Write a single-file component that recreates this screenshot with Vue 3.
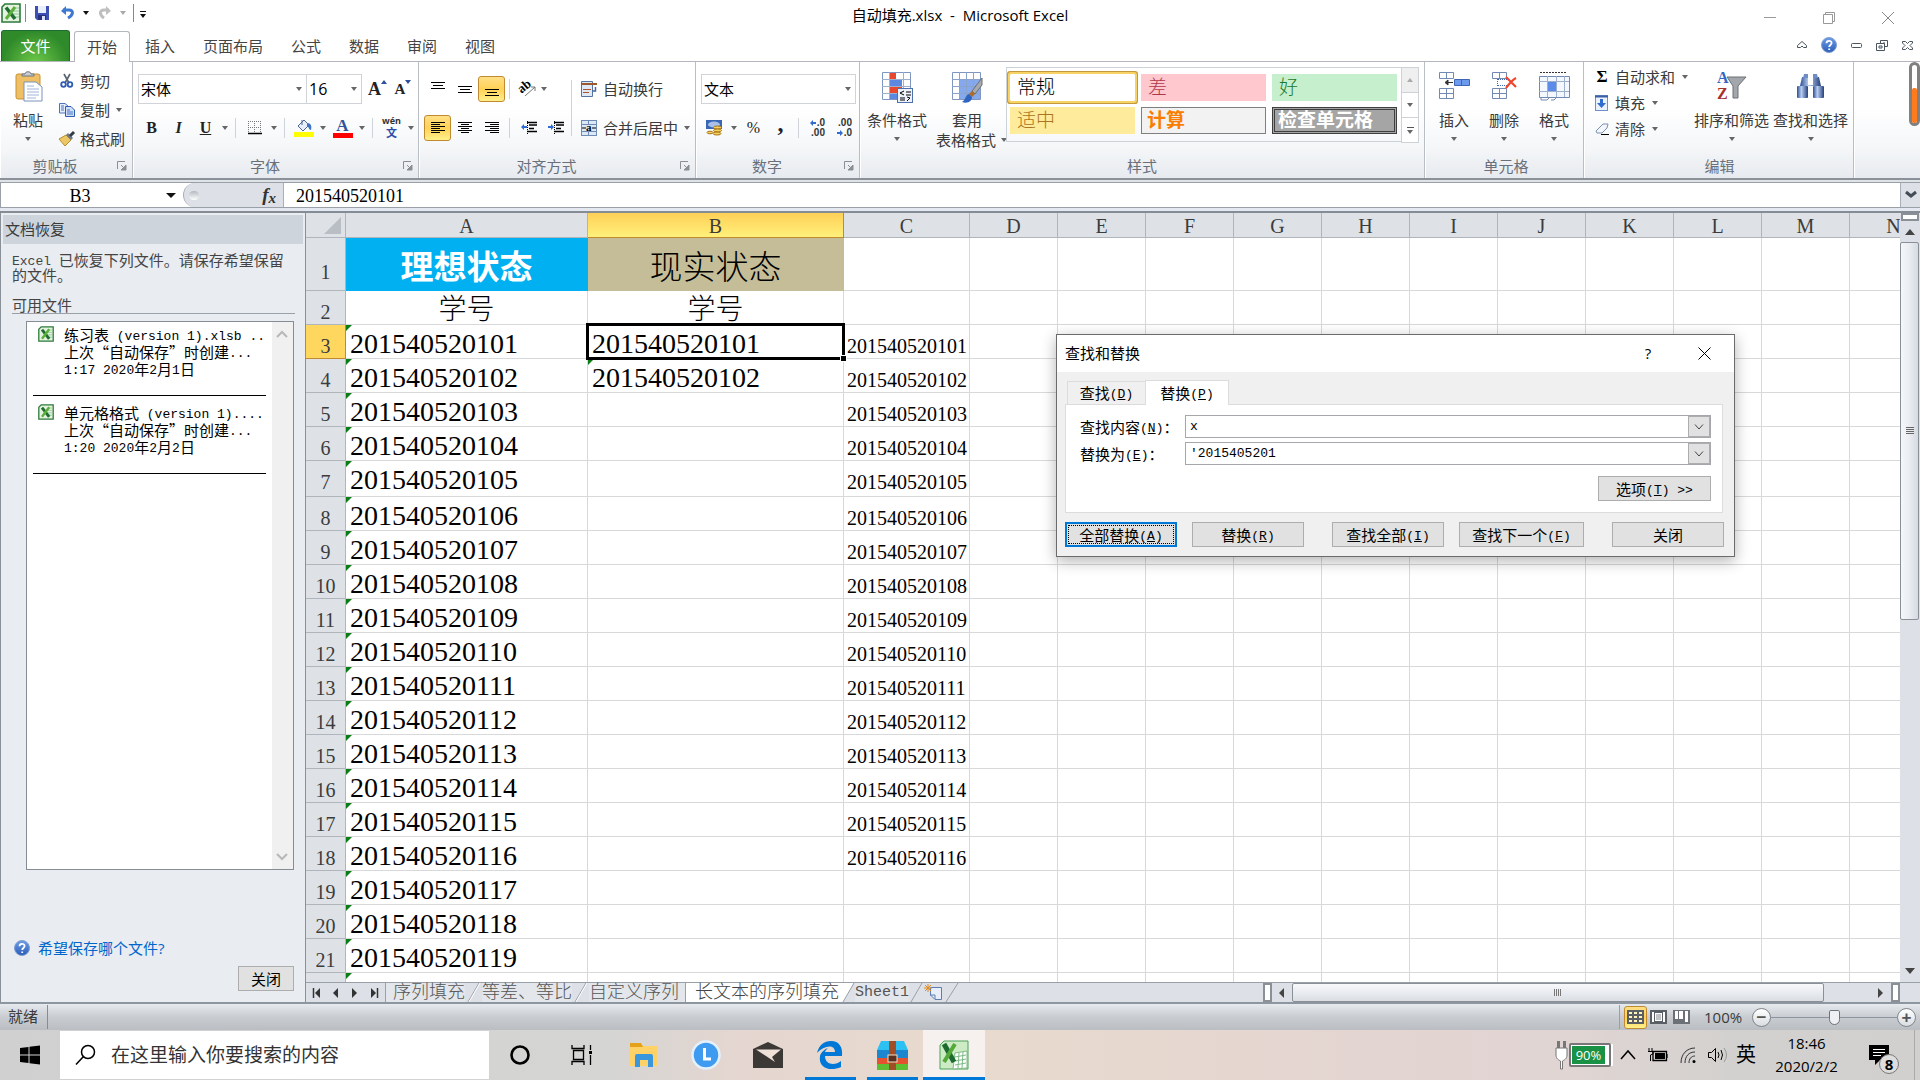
<script setup>
import { ref } from 'vue'

const ribbonTabs = ['插入', '页面布局', '公式', '数据', '审阅', '视图']
const columns = ['A', 'B', 'C', 'D', 'E', 'F', 'G', 'H', 'I', 'J', 'K', 'L', 'M', 'N']
const restColumns = columns.slice(3)

const base = 201540520100
const rows = Array.from({ length: 19 }, (_, i) => ({
  n: i + 3,
  a: String(base + i + 1),
  b: i < 2 ? String(base + i + 1) : '',
  c: i < 16 ? String(base + i + 1) : '',
}))

const files = [
  { doc: '练习表', rest: ' (version 1).xlsb ..', time: ['1:17 2020', '年', '2', '月', '1', '日'] },
  { doc: '单元格格式', rest: ' (version 1)....', time: ['1:20 2020', '年', '2', '月', '2', '日'] },
]

const nameBox = ref('B3')
const formula = ref('201540520101')
const findText = ref('x')
const replaceText = ref("'2015405201")
const zoomLevel = ref(50)
</script>

<template>
  <div class="window">
    <svg width="0" height="0" class="defs" aria-hidden="true">
      <defs>
        <linearGradient id="helpFill" x1="0" y1="0" x2="0" y2="1">
          <stop offset="0" stop-color="#6d9de6" /><stop offset="1" stop-color="#2a5db8" />
        </linearGradient>
        <linearGradient id="steel" x1="0" y1="0" x2="1" y2="0">
          <stop offset="0" stop-color="#2c4f93" /><stop offset="0.4" stop-color="#b8cdf0" /><stop offset="1" stop-color="#23407c" />
        </linearGradient>
        <symbol id="xl" viewBox="0 0 20 20">
          <path d="M4 1H19V19H1V4Z" fill="#e4f3df" stroke="#2c7a3a" stroke-width="1.6" />
          <path d="M12 5h6M12 8h6M12 11h6M12 14h6" stroke="#8cc79a" />
          <path d="M5 4.500L14 16" stroke="#1f6d33" stroke-width="3.600" />
          <path d="M14 4L5 16" stroke="#5eae3c" stroke-width="3" />
        </symbol>
        <symbol id="help" viewBox="0 0 16 16">
          <circle cx="8" cy="8" r="7.500" fill="url(#helpFill)" stroke="#7f9fd0" />
          <path d="M5.500 6.200C5.500 3 10.600 3 10.600 6.100C10.600 8 8.200 8 8.200 10M8.200 11.500V13" fill="none" stroke="#fff" stroke-width="1.800" />
        </symbol>
        <symbol id="launch" viewBox="0 0 10 10">
          <path d="M0.500 8V0.500H8" fill="none" stroke="#8a8f96" /><path d="M4 4L8 8M9 4V9H4Z" fill="#8a8f96" stroke="#8a8f96" />
        </symbol>
      </defs>
    </svg>

    <header class="titlebar">
      <div class="quick">
        <svg width="20" height="20"><use href="#xl" /></svg>
        <i class="qsep"></i>
        <button class="q save" aria-label="保存">
          <svg width="14" height="14" viewBox="0 0 14 14"><path d="M0 0H14V14H2L0 12Z" fill="#3e4fb4" /><rect x="3" width="8" height="7" fill="#e8eefb" /><rect x="3" y="9" width="8" height="5" fill="#26307c" /><rect x="7" y="10" width="3" height="4" fill="#d8e0f4" /></svg>
        </button>
        <button class="q undo" aria-label="撤消">
          <svg width="14" height="14" viewBox="0 0 14 14"><path d="M2 4H8C13 4 12.500 9 7 12" fill="none" stroke="#3f78d0" stroke-width="3" /><path d="M0 5L5 0V9Z" fill="#3f78d0" /></svg>
        </button>
        <i class="tri dark"></i>
        <button class="q redo" aria-label="恢复">
          <svg width="14" height="14" viewBox="0 0 14 14"><path d="M11 4H6C1 4 1.500 9 6 12" fill="none" stroke="#bfbfbf" stroke-width="3" /><path d="M13 5L8 0V9Z" fill="#bfbfbf" /></svg>
        </button>
        <i class="tri pale"></i>
        <i class="qsep end"></i>
        <span class="more"><i class="tri dark"></i></span>
      </div>
      <h1>自动填充.xlsx&nbsp; - &nbsp;Microsoft Excel</h1>
      <div class="winbtns">
        <button aria-label="最小化"><svg width="12" height="12"><path d="M0 5.500H12" stroke="#999" /></svg></button>
        <button aria-label="还原"><svg width="12" height="12"><path d="M0.500 2.500H9.500V11.500H0.500ZM2.500 2.500V0.500H11.500V9.500H9.500" fill="none" stroke="#999" /></svg></button>
        <button aria-label="关闭窗口"><svg width="12" height="12"><path d="M0 0L12 12M12 0L0 12" stroke="#888" /></svg></button>
      </div>
    </header>

    <nav class="tabs">
      <button class="file">文件</button>
      <button class="on">开始</button>
      <button v-for="t in ribbonTabs" :key="t">{{ t }}</button>
      <div class="mdi">
        <svg width="10" height="8"><path d="M0.500 4.500L5 0.500L9.500 4.500V6.500H6.500L5 5L3.500 6.500H0.500Z" fill="#fff" stroke="#4a5560" /></svg>
        <svg width="16" height="16"><use href="#help" /></svg>
        <svg width="11" height="5"><rect x="0.500" y="0.500" width="10" height="4" rx="1" fill="#fff" stroke="#4a5560" /></svg>
        <svg width="12" height="11"><path d="M4.500 3.500V0.500H11.500V6.500H8.500M0.500 3.500H8.500V10.500H0.500ZM3 6H6V8H3ZM7 3H9" fill="none" stroke="#4a5560" /></svg>
        <svg width="11" height="9"><path d="M0.500 0.500H3.500L5.500 2.500L7.500 0.500H10.500V2L8 4.500L10.500 7V8.500H7.500L5.500 6.500L3.500 8.500H0.500V7L3 4.500L0.500 2Z" fill="#fff" stroke="#4a5560" /></svg>
      </div>
    </nav>

    <section class="ribbon">
      <div class="group g-clip">
        <div class="body">
          <button class="big paste">
            <svg width="30" height="32" viewBox="0 0 30 32"><rect x="1" y="3" width="24" height="25" rx="2" fill="#efbf65" stroke="#c99236" /><path d="M7 5V3H10C10 0 16 0 16 3H19V5Z" fill="#c9cdd3" stroke="#6e7780" /><path d="M9 11H21L27 16V30H9Z" fill="#fff" stroke="#7a92bd" /><path d="M12 15H19M12 18H24M12 21H24M12 24H24M12 27H21" stroke="#9fb4d8" /></svg>
            <span>粘贴</span><i class="tri"></i>
          </button>
          <div class="smalls wide">
            <button><svg width="16" height="16" viewBox="0 0 16 16"><path d="M5 1L10 10M11 1L6 10" stroke="#5b6675" stroke-width="1.700" /><circle cx="4.500" cy="11.500" r="2.300" fill="none" stroke="#2e5cb5" stroke-width="1.800" /><circle cx="11" cy="11.500" r="2.300" fill="none" stroke="#2e5cb5" stroke-width="1.800" /></svg>剪切</button>
            <button><svg width="16" height="16" viewBox="0 0 16 16"><path d="M0.500 1.500H6L9 4V11H0.500Z" fill="#e5eefc" stroke="#4a74be" /><path d="M6.500 4.500H12L15.500 8V14.500H6.500Z" fill="#cfe0fa" stroke="#2f5cb0" /><path d="M2 4H5M2 6H5M2 8H5M8 8H11M8 10H14M8 12H14" stroke="#4a74be" /></svg>复制<i class="tri"></i></button>
            <button><svg width="16" height="16" viewBox="0 0 16 16"><path d="M0 8L7 4L12 9L6 15Z" fill="#ecc765" stroke="#b78c2c" /><path d="M7 4L9 2L14 7L12 9Z" fill="#707a86" /><path d="M11 5L15 1" stroke="#343c46" stroke-width="3" /></svg>格式刷</button>
          </div>
        </div>
        <footer>剪贴板<svg width="10" height="10"><use href="#launch" /></svg></footer>
      </div>

      <div class="group g-font">
        <div class="body rows">
          <div class="row">
            <label class="combo font-name"><select aria-label="字体"><option>宋体</option></select><i class="tri"></i></label>
            <label class="combo font-size"><select aria-label="字号"><option>16</option></select><i class="tri"></i></label>
            <button class="ib serif grow">A<i class="tri up blue"></i></button>
            <button class="ib serif shrink">A<i class="tri blue"></i></button>
          </div>
          <div class="row">
            <button class="ib serif">B</button><button class="ib serif"><em>I</em></button><button class="ib serif"><u>U</u></button>
            <i class="tri dd"></i><i class="vs"></i>
            <button class="ib" aria-label="边框"><svg width="14" height="14"><path d="M0 0.500H13M0 6.500H13M0.500 0V12M6.500 0V12M12.500 0V12" stroke="#777" stroke-dasharray="1 1" /><path d="M0 12.500H14" stroke="#000" stroke-width="1.500" /></svg></button>
            <i class="tri dd"></i><i class="vs"></i>
            <button class="ib" aria-label="填充颜色"><svg width="20" height="18" viewBox="0 0 20 18"><path d="M4 7L10 1L15 6L9 12Z" fill="#e9eff8" stroke="#4c6796" /><path d="M8 1V6" stroke="#4c6796" /><path d="M13 4C17 4 18 7 17 11C15 11 15 8 13 7Z" fill="#3e72c4" /><rect y="13" width="20" height="5" fill="#ff0" /></svg></button>
            <i class="tri dd"></i>
            <button class="ib fontcolor"><b>A</b></button>
            <i class="tri dd"></i><i class="vs"></i>
            <button class="ib wen"><span>wén</span><span>文</span></button>
            <i class="tri dd"></i>
          </div>
        </div>
        <footer>字体<svg width="10" height="10"><use href="#launch" /></svg></footer>
      </div>

      <div class="group g-align">
        <div class="body">
          <div class="rows">
            <div class="row">
              <button class="ib" aria-label="顶端对齐"><svg width="14" height="18"><path d="M0 2.500H14M2 5.500H12M0 8.500H14" stroke="#000" /></svg></button>
              <button class="ib" aria-label="垂直居中"><svg width="14" height="18"><path d="M0 6.500H14M2 9.500H12M0 12.500H14" stroke="#000" /></svg></button>
              <button class="ib sel" aria-label="底端对齐"><svg width="14" height="18"><path d="M0 9.500H14M2 12.500H12M0 15.500H14" stroke="#000" /></svg></button>
              <i class="vs"></i>
              <button class="ib slant" aria-label="方向"><svg width="17" height="16" viewBox="0 0 17 16"><text x="0" y="9" transform="rotate(-40 6 9)" font-size="13" font-weight="bold" font-family="Liberation Serif">ab</text><path d="M5 15L15 6M11 6H15V10" fill="none" stroke="#777" /></svg></button>
              <i class="tri dd near"></i>
            </div>
            <div class="row">
              <button class="ib sel" aria-label="左对齐"><svg width="14" height="14"><path d="M0 1.500H14M0 3.500H9M0 5.500H14M0 7.500H9M0 9.500H14M0 11.500H9" stroke="#000" /></svg></button>
              <button class="ib" aria-label="居中"><svg width="14" height="14"><path d="M0 1.500H14M3 3.500H11M0 5.500H14M3 7.500H11M0 9.500H14M3 11.500H11" stroke="#000" /></svg></button>
              <button class="ib" aria-label="右对齐"><svg width="14" height="14"><path d="M0 1.500H14M5 3.500H14M0 5.500H14M5 7.500H14M0 9.500H14M5 11.500H14" stroke="#000" /></svg></button>
              <i class="vs"></i>
              <button class="ib" aria-label="减少缩进"><svg width="16" height="14"><path d="M6 1.500H16M8 4H16M8 7.500H13M6 10.500H16" stroke="#000" stroke-width="1.600" /><path d="M6.500 0V14" stroke="#000" stroke-dasharray="1 1" /><path d="M0 6L3 3V5H6V7H3V9Z" fill="#2f6bd0" /></svg></button>
              <button class="ib" aria-label="增加缩进"><svg width="16" height="14"><path d="M6 1.500H16M8 4H16M8 7.500H13M6 10.500H16" stroke="#000" stroke-width="1.600" /><path d="M6.500 0V14" stroke="#000" stroke-dasharray="1 1" /><path d="M6 6L3 3V5H0V7H3V9Z" fill="#2f6bd0" /></svg></button>
            </div>
          </div>
          <i class="vs tall"></i>
          <div class="rows">
            <button class="row lab"><svg width="16" height="16"><path d="M0.500 0.500H11.500V15.500H0.500Z" fill="#dfe8f5" stroke="#56739f" /><path d="M0 3H16" stroke="#9c5a2c" stroke-width="2" /><path d="M2 8.500H10M2 11.500H8" stroke="#b0532c" /><path d="M14.500 6V10H11" fill="none" stroke="#46699f" stroke-width="1.500" /></svg>自动换行</button>
            <button class="row lab"><svg width="16" height="16"><rect width="16" height="16" fill="#6f8bb5" /><path d="M1 1H7V4H1ZM8 1H15V4H8ZM1 12H7V15H1ZM8 12H15V15H8ZM1 5H15V11H1Z" fill="#dce8f6" /><path d="M1 8H5M11 8H15" stroke="#000" /><text x="5" y="11" font-size="11" font-weight="bold" font-family="Liberation Serif">a</text></svg>合并后居中<i class="tri"></i></button>
          </div>
        </div>
        <footer>对齐方式<svg width="10" height="10"><use href="#launch" /></svg></footer>
      </div>

      <div class="group g-num">
        <div class="body rows">
          <div class="row"><label class="combo num-format"><select aria-label="数字格式"><option>文本</option></select><i class="tri"></i></label></div>
          <div class="row">
            <button class="ib" aria-label="会计数字格式"><svg width="17" height="16"><rect width="16" height="9" fill="#3a66b5" /><ellipse cx="8" cy="4.500" rx="6" ry="3" fill="#a9c1e8" /><ellipse cx="11.500" cy="7.500" rx="4" ry="1.500" fill="#f5cf5a" stroke="#a6741a" /><ellipse cx="11.500" cy="10.500" rx="4" ry="1.500" fill="#f5cf5a" stroke="#a6741a" /><ellipse cx="11" cy="13.500" rx="4" ry="1.500" fill="#f5cf5a" stroke="#a6741a" /><ellipse cx="4" cy="12.500" rx="3" ry="1.300" fill="#f5cf5a" stroke="#a6741a" /></svg></button>
            <i class="tri dd"></i>
            <button class="ib pct">%</button>
            <button class="ib comma">,</button>
            <i class="vs"></i>
            <button class="ib dec"><span><svg width="6" height="6"><path d="M0 3L3 0V2H6V4H3V6Z" fill="#2f6bd0" /></svg>.0</span><span>.00</span></button>
            <button class="ib dec"><span>.00</span><span><svg width="6" height="6"><path d="M6 3L3 0V2H0V4H3V6Z" fill="#2f6bd0" /></svg>.0</span></button>
          </div>
        </div>
        <footer>数字<svg width="10" height="10"><use href="#launch" /></svg></footer>
      </div>

      <div class="group g-style">
        <div class="body">
          <button class="big w70"><svg width="31" height="32" viewBox="0 0 31 32"><path d="M0.500 1.500H28.500V28.500H0.500Z" fill="#fff" stroke="#7f97c0" /><path d="M0 8.500H28M0 15.500H28M0 22.500H28M7.500 1V28M21.500 1V28" stroke="#9fb0cf" /><path d="M8 2H14V8H8ZM8 16H20V22H8Z" fill="#e8482f" /><path d="M8 9H20V15H8ZM8 23H16V28H8Z" fill="#5c88e0" /><rect x="15.500" y="17.500" width="15" height="14" fill="#eef3fb" stroke="#4d72ac" /><path d="M22 20L18 22L22 24M18 27H23M18 29H23M24 21H29M24 24H29M25 26L28 27L25 30" fill="none" stroke="#000" /></svg><span>条件格式</span><i class="tri"></i></button>
          <button class="big w70 two"><svg width="31" height="32" viewBox="0 0 31 32"><path d="M0.500 1.500H28.500V28.500H0.500Z" fill="#fff" stroke="#7f97c0" /><path d="M8 8H28V28H8Z" fill="#86a9ee" /><path d="M0 8.500H28M0 15.500H28M0 22.500H28M7.500 1V28M14.500 1V28M21.500 1V28" stroke="#8ba2cb" /><path d="M30 7L20 20L23 23L30 14Z" fill="#a7a9ad" stroke="#6c6e72" /><path d="M20 20L17 23L20 26L23 23Z" fill="#b06c24" /><path d="M17 23C13 24 14 29 10 31C16 33 20 30 20 26Z" fill="#2f65bf" /></svg><span>套用</span><span>表格格式<i class="tri"></i></span></button>
          <div class="gallery">
            <div class="swatches">
              <button class="sw normal">常规</button><button class="sw bad">差</button><button class="sw good">好</button>
              <button class="sw neutral">适中</button><button class="sw calc">计算</button><button class="sw check">检查单元格</button>
            </div>
            <div class="gscroll"><button aria-label="上一行"><i class="tri up pale"></i></button><button aria-label="下一行"><i class="tri"></i></button><button aria-label="其他"><span class="bar"></span><i class="tri"></i></button></div>
          </div>
        </div>
        <footer>样式</footer>
      </div>

      <div class="group g-cells">
        <div class="body">
          <button class="big w50"><svg width="31" height="32" viewBox="0 0 31 32"><path d="M0.500 1.500H14.500V7.500H0.500ZM7.500 1V7M0.500 17.500H14.500V27.500H0.500ZM7.500 17V27M0 22.500H14" fill="#fff" stroke="#7289b3" /><path d="M15.500 8.500H30.500V14.500H15.500ZM22.500 8V14" fill="#6c9aec" stroke="#3d66b4" /><path d="M6 11.500L9 9V14ZM9 11.500H14" fill="#333" stroke="#333" /></svg><span>插入</span><i class="tri"></i></button>
          <button class="big w50"><svg width="31" height="32" viewBox="0 0 31 32"><path d="M3.500 1.500H17.500V7.500H3.500ZM10.500 1V7M3.500 17.500H17.500V27.500H3.500ZM10.500 17V27M3 22.500H17" fill="#fff" stroke="#7289b3" /><path d="M9 8.500H18M9 14.500H18M8.500 8V15" fill="none" stroke="#3d66b4" stroke-dasharray="1 1" /><path d="M17 6L27 16M27 7C23 9 20 13 17 17" stroke="#f0452e" stroke-width="2.200" fill="none" /></svg><span>删除</span><i class="tri"></i></button>
          <button class="big w50"><svg width="31" height="32" viewBox="0 0 31 32"><path d="M1 1.500H27" stroke="#333" stroke-dasharray="2 1" /><path d="M0.500 5.500H30.500V26.500H0.500Z" fill="#f4f8ff" stroke="#7289b3" /><path d="M0 10.500H30M0 20.500H30M8.500 5V26M17.500 5V26M25.500 5V26" stroke="#9fb0cf" /><rect x="9" y="11" width="8" height="9" fill="#5c8bea" /><path d="M2 26V29H8L11 26M12 29H15L18 26" fill="none" stroke="#7289b3" /></svg><span>格式</span><i class="tri"></i></button>
        </div>
        <footer>单元格</footer>
      </div>

      <div class="group g-edit">
        <div class="body">
          <div class="smalls tight">
            <button><span class="sigma">Σ</span>自动求和<i class="tri"></i></button>
            <button><svg width="14" height="16"><rect x="0.500" y="0.500" width="12" height="15" fill="#eaf2fd" stroke="#6f8fc6" /><path d="M5 4H8V8H11L6.500 13L2 8H5Z" fill="#2f6bd0" /><path d="M0 1.500H13" stroke="#3a5fa5" stroke-width="2" /></svg>填充<i class="tri"></i></button>
            <button><svg width="14" height="14" viewBox="0 0 14 14"><path d="M1 9L8 2H13L12 6L7 11H2Z" fill="#f3f6fb" stroke="#7b8fb5" /><path d="M6 12.500H14" stroke="#000" /></svg>清除<i class="tri"></i></button>
          </div>
          <button class="big w80"><svg width="31" height="32" viewBox="0 0 31 32"><path d="M11 6H30L22 15V27H17V15Z" fill="#a3a6aa" stroke="#6d7074" /><text x="1" y="12" font-size="16" font-weight="bold" fill="#3567c2" font-family="Liberation Serif">A</text><text x="1" y="28" font-size="16" font-weight="bold" fill="#a8322b" font-family="Liberation Serif">Z</text></svg><span>排序和筛选</span><i class="tri"></i></button>
          <button class="big w80"><svg width="29" height="32" viewBox="0 0 29 32"><path d="M6 6H12V14H17V6H23L25 15H4Z" fill="url(#steel)" /><path d="M8 3H12V7H7ZM17 3H21L22 7H17Z" fill="#6f8dc4" /><rect x="1" y="15" width="11" height="12" rx="1" fill="url(#steel)" /><rect x="17" y="15" width="11" height="12" rx="1" fill="url(#steel)" /></svg><span>查找和选择</span><i class="tri"></i></button>
        </div>
        <footer>编辑</footer>
      </div>
      <div class="group rest"></div>
      <div class="pill"><span></span></div>
    </section>

    <section class="formula">
      <input v-model="nameBox" class="namebox" aria-label="名称框" />
      <i class="tri dark"></i>
      <div class="fx"><span class="knob"></span><em>f<sub>x</sub></em></div>
      <input v-model="formula" class="fbar" aria-label="编辑栏" />
      <button class="expand" aria-label="展开编辑栏"><svg width="12" height="8"><path d="M1 1L6 5L11 1" fill="none" stroke="#444c55" stroke-width="3" /></svg></button>
    </section>

    <main class="work">
      <aside class="pane">
        <h2>文档恢复</h2>
        <p><span class="lat">Excel </span>已恢复下列文件。请保存希望保留的文件。</p>
        <h3>可用文件</h3>
        <div class="filebox">
          <ul>
            <li v-for="f in files" :key="f.doc">
              <svg width="16" height="16"><use href="#xl" /></svg>
              <div>
                <div>{{ f.doc }}<span class="lat">{{ f.rest }}</span></div>
                <div>上次“自动保存”时创建<span class="lat">...</span></div>
                <div><span v-for="(p, i) in f.time" :key="i" :class="{ lat: i % 2 === 0 }">{{ p }}</span></div>
              </div>
            </li>
          </ul>
          <div class="fscroll">
            <svg width="10" height="7"><path d="M0 6L5 1L10 6" fill="none" stroke="#b8b8b8" stroke-width="2" /></svg>
            <svg width="10" height="7"><path d="M0 1L5 6L10 1" fill="none" stroke="#b8b8b8" stroke-width="2" /></svg>
          </div>
        </div>
        <a href="#help-save"><svg width="16" height="16"><use href="#help" /></svg>希望保存哪个文件?</a>
        <button class="btn paneclose">关闭</button>
      </aside>

      <div class="sheet">
        <div class="gridrow">
          <div class="grid">
            <table>
              <colgroup><col class="c-h" /><col class="c-a" /><col class="c-b" /><col class="c-c" /><col v-for="c in restColumns" :key="c" class="c-n" /></colgroup>
              <thead>
                <tr><th class="corner"><svg width="17" height="17"><path d="M17 0V17H0Z" fill="#b9bec4" /></svg></th><th v-for="c in columns" :key="c" :class="{ hot: c === 'B' }">{{ c }}</th></tr>
              </thead>
              <tbody>
                <tr class="r1"><th>1</th><td class="ideal">理想状态</td><td class="real">现实状态</td><td></td><td v-for="c in restColumns" :key="c"></td></tr>
                <tr><th>2</th><td class="mid">学号</td><td class="mid">学号</td><td></td><td v-for="c in restColumns" :key="c"></td></tr>
                <tr v-for="r in rows" :key="r.n" :class="{ r7: r.n === 7 }">
                  <th :class="{ hot: r.n === 3 }">{{ r.n }}</th>
                  <td class="flag">{{ r.a }}</td>
                  <td :class="{ flag: r.n === 4, active: r.n === 3 }">{{ r.b }}</td>
                  <td class="sm">{{ r.c }}</td>
                  <td v-for="c in restColumns" :key="c"></td>
                </tr>
                <tr><th></th><td class="flag"></td><td v-for="c in columns.slice(1)" :key="c"></td></tr>
              </tbody>
            </table>
          </div>
          <div class="vscroll">
            <span class="split"></span>
            <i class="arrow up"></i>
            <div class="track"><div class="thumb"><i></i><i></i><i></i><i></i></div></div>
            <i class="arrow down"></i>
          </div>
        </div>
        <div class="bottom">
          <div class="navs">
            <button aria-label="第一张"><svg width="8" height="10"><path d="M1.500 0V10" stroke="#333" stroke-width="1.500" /><path d="M8 0V10L3 5Z" fill="#333" /></svg></button>
            <button aria-label="上一张"><svg width="6" height="10"><path d="M5 0V10L0 5Z" fill="#333" /></svg></button>
            <button aria-label="下一张"><svg width="6" height="10"><path d="M0 0V10L5 5Z" fill="#333" /></svg></button>
            <button aria-label="最后一张"><svg width="8" height="10"><path d="M6.500 0V10" stroke="#333" stroke-width="1.500" /><path d="M0 0V10L5 5Z" fill="#333" /></svg></button>
          </div>
          <button class="stab">序列填充</button>
          <svg class="slash" width="17" height="19"><path d="M3 19L14 0" fill="none" stroke="#9aa0a8" /><path d="M4 19L15 0" stroke="#fff" /></svg>
          <button class="stab">等差、等比</button>
          <svg class="slash" width="17" height="19"><path d="M3 19L14 0" fill="none" stroke="#9aa0a8" /><path d="M4 19L15 0" stroke="#fff" /></svg>
          <button class="stab last">自定义序列</button>
          <button class="stab on">长文本的序列填充</button>
          <svg class="slash end" width="14" height="19"><path d="M0 0H13L2 19H0Z" fill="#fff" /><path d="M2 19L13 0" stroke="#9aa0a8" /></svg>
          <button class="stab eng">Sheet1</button>
          <svg class="slash" width="14" height="19"><path d="M2 19L13 0" stroke="#9aa0a8" /></svg>
          <button class="newsheet" aria-label="插入工作表"><svg width="20" height="17"><path d="M6.500 3.500H17.500V15.500H11L6.500 11Z" fill="#e8effb" stroke="#5f7cb0" /><path d="M11 15V11H6" fill="none" stroke="#5f7cb0" /><path d="M4 0V8M0 4H8M1 1L7 7M7 1L1 7" stroke="#e08a1e" /></svg></button>
          <svg class="slash" width="18" height="19"><path d="M2 19L14 0" stroke="#9aa0a8" /></svg>
          <div class="hscroll">
            <span class="hsplit"></span><i class="arrow left"></i>
            <div class="htrack"><div class="hthumb"><i></i><i></i><i></i><i></i></div></div>
            <i class="arrow right"></i><span class="hsplit"></span>
          </div>
        </div>
      </div>
    </main>

    <footer class="status">
      <span class="ready">就绪</span>
      <div class="views">
        <button class="sel" aria-label="普通"><svg width="17" height="14"><rect width="17" height="14" fill="#5a5f66" /><path d="M2 2H5V4H2ZM7 2H10V4H7ZM12 2H15V4H12ZM2 6H5V8H2ZM7 6H10V8H7ZM12 6H15V8H12ZM2 10H5V12H2ZM7 10H10V12H7ZM12 10H15V12H12Z" fill="#fff3b8" /></svg></button>
        <button aria-label="页面布局视图"><svg width="17" height="14"><rect x="1" y="1" width="15" height="12" fill="#fff" stroke="#5a5f66" stroke-width="2" /><rect x="4.500" y="2.500" width="8" height="9" fill="#fff" stroke="#5a5f66" /><path d="M6 5H11M6 7H11M6 9H11" stroke="#888" /></svg></button>
        <button aria-label="分页预览"><svg width="17" height="14"><rect width="17" height="14" fill="#6c7178" /><path d="M2 1H5V9H2ZM6 1H10V9H6ZM12 1H15V12H12Z" fill="#fff" /></svg></button>
        <span class="pctv">100%</span>
        <button class="round" aria-label="缩小">−</button>
        <input v-model="zoomLevel" type="range" aria-label="显示比例" />
        <button class="round" aria-label="放大">+</button>
      </div>
    </footer>

    <footer class="taskbar">
      <button class="start" aria-label="开始菜单"><svg width="20" height="20"><path d="M0 3L8.500 2V9.500H0ZM9.500 1.800L20 0.500V9.500H9.500ZM0 10.500H8.500V18L0 17ZM9.500 10.500H20V19.500L9.500 18.200Z" /></svg></button>
      <label class="search"><svg width="22" height="22"><circle cx="13" cy="8" r="6.500" fill="none" stroke="#000" stroke-width="1.500" /><path d="M8.500 12.500L1 20.500" stroke="#000" stroke-width="1.500" /></svg><input placeholder="在这里输入你要搜索的内容" /></label>
      <button class="app" aria-label="Cortana"><svg width="20" height="20"><circle cx="10" cy="10" r="8.500" fill="none" stroke="#000" stroke-width="2.600" /></svg></button>
      <button class="app" aria-label="任务视图"><svg width="22" height="20"><path d="M1 0V3.500H13V0M2.500 5.500H12.500V14.500H2.500ZM1 20V16.500H13V20M19.500 0V5M19.500 10V20" fill="none" stroke="#000" stroke-width="1.300" /><rect x="18" y="6" width="3" height="3" /></svg></button>
      <button class="app" aria-label="文件资源管理器"><svg width="28" height="24"><path d="M0 0H11L13 3H27V23H0Z" fill="#ffd267" /><path d="M0 0H11L13 4H0Z" fill="#e5a11a" /><path d="M5 24V13Q5 11 7 11H21Q23 11 23 13V24H18V17H10V24Z" fill="#3a96dd" /></svg></button>
      <button class="app" aria-label="时钟"><svg width="30" height="30"><circle cx="15" cy="15" r="13.500" fill="#3f9bf0" stroke="#e4f1fc" stroke-width="2.500" /><path d="M13.500 8V19H20" fill="none" stroke="#fff" stroke-width="3" /></svg></button>
      <button class="app" aria-label="邮件"><svg width="30" height="26"><path d="M0 7L15 0L30 7V26H0Z" fill="#3b3836" /><path d="M3 7.500H28L19 15L22 20L13 14Z" fill="#efe0d8" /></svg></button>
      <button class="app run" aria-label="Edge"><svg width="26" height="28" viewBox="0 0 26 28"><path d="M0 12C2 4 7 0 14 0C22 0 26 6 25 15H8C8 24 18 25 24 20V26C13 31 1 27 3 15C4 11 8 8 11 7C9 9 8 10 8 11H18C18 3 7 4 0 12Z" fill="#0078d7" /></svg></button>
      <button class="app run" aria-label="WinRAR"><svg width="31" height="29"><path d="M4 0H27L31 9H0Z" fill="#2cc0f3" /><rect y="9" width="31" height="8" fill="#1c86cf" /><rect y="17" width="31" height="6" fill="#e3532f" /><rect y="23" width="31" height="6" fill="#5dbe34" /><rect x="12" width="7" height="29" fill="#a04e25" /><rect x="11" y="14" width="9" height="7" fill="#5a2f1f" stroke="#f2e2c8" /></svg></button>
      <button class="app run cur" aria-label="Excel"><svg width="30" height="30" viewBox="0 0 30 30"><path d="M5 1H29V29H1V5Z" fill="#cdebc4" stroke="#4aa35a" /><path d="M16 13L28 11V28L14 29Z" fill="#fff" stroke="#7dbb86" /><path d="M16 17L27 15M16 21L27 19M16 25L27 23M20 13L19 28M24 12L23 28" stroke="#7dbb86" /><path d="M5 4L15 22" stroke="#1c6a32" stroke-width="5" /><path d="M16 4L5 22" stroke="#55a83a" stroke-width="4" /></svg></button>
      <div class="tray">
        <svg width="14" height="30"><path d="M3.500 1V9M9.500 1V9" stroke="#777" stroke-width="3" /><path d="M1 8H12V15C12 19 9 20 7.500 21V29H5.500V21C4 20 1 19 1 15Z" fill="#fff" stroke="#777" /></svg>
        <span class="battery"><b>90%</b></span>
        <svg class="g1" width="16" height="10"><path d="M1 9L8 1L15 9" fill="none" stroke="#000" stroke-width="1.500" /></svg>
        <svg class="g2" width="20" height="16"><path d="M5 4.500H18.500V13.500H5ZM19 7V11" fill="none" stroke="#000" stroke-width="1.300" /><rect x="7" y="6" width="10" height="6" /><path d="M1 1V4M4 1V4M0 4.500H5V7L2.500 8V14" fill="none" stroke="#000" /></svg>
        <svg class="g2" width="16" height="16"><path d="M1 16C1 7 7 1 15 1M5 16C5 9 9 5 15 5M9 16C9 12 11 9 15 9" fill="none" stroke="#333" /><circle cx="14" cy="14.500" r="1.500" /></svg>
        <svg class="g3" width="20" height="16"><path d="M0.500 5.500H3.500L7.500 1.500V14.500L3.500 10.500H0.500Z" fill="none" stroke="#000" /><path d="M10 5Q12 8 10 11M13 3Q16 8 13 13" fill="none" stroke="#000" /><path d="M16 1Q21 8 16 15" fill="none" stroke="#999" /></svg>
        <span class="ime">英</span>
        <div class="clock"><span>18:46</span><span>2020/2/2</span></div>
        <div class="notice"><svg width="20" height="20"><path d="M0 0H20V15H11L6 20V15H0Z" /><path d="M4 4.500H16M4 7.500H16M4 10.500H12" stroke="#fff" /></svg><span>8</span></div>
      </div>
    </footer>

    <div class="dialog" role="dialog" aria-label="查找和替换">
      <div class="dtitle"><span>查找和替换</span><button>?</button><button aria-label="关闭对话框"><svg width="13" height="13"><path d="M0.500 0.500L12.500 12.500M12.500 0.500L0.500 12.500" stroke="#000" /></svg></button></div>
      <div class="dtabs"><button>查找<span class="lat">(<u>D</u>)</span></button><button class="on">替换<span class="lat">(<u>P</u>)</span></button></div>
      <div class="dpanel">
        <label for="find">查找内容<span class="lat">(<u>N</u>)</span>：</label>
        <div class="dcombo"><input id="find" v-model="findText" /><button aria-label="查找历史"><svg width="10" height="6"><path d="M1 0.500L5 5L9 0.500" fill="none" stroke="#444" /></svg></button></div>
        <label for="repl">替换为<span class="lat">(<u>E</u>)</span>：</label>
        <div class="dcombo"><input id="repl" v-model="replaceText" /><button aria-label="替换历史"><svg width="10" height="6"><path d="M1 0.500L5 5L9 0.500" fill="none" stroke="#444" /></svg></button></div>
        <button class="btn opt">选项<span class="lat">(<u>T</u>) &gt;&gt;</span></button>
      </div>
      <div class="dbtns">
        <button class="btn focus">全部替换<span class="lat">(<u>A</u>)</span></button>
        <button class="btn">替换<span class="lat">(<u>R</u>)</span></button>
        <button class="btn far">查找全部<span class="lat">(<u>I</u>)</span></button>
        <button class="btn wide">查找下一个<span class="lat">(<u>F</u>)</span></button>
        <button class="btn far">关闭</button>
      </div>
    </div>
  </div>
</template>

<style>
body { margin: 0; overflow: hidden; }
</style>

<style scoped>
.window { position: relative; display: flex; flex-direction: column; height: 100vh; overflow: hidden; background: #fff; color: #3a3a3a; font: 15px/20px "Open Sans", "Noto Sans CJK SC", sans-serif; }
.window * { box-sizing: border-box; }
.defs { position: absolute; }
button { margin: 0; padding: 0; border: 0; background: none; color: inherit; font: inherit; white-space: nowrap; }
input, select { margin: 0; padding: 0; border: 0; outline: 0; color: #000; font: inherit; background: none; min-width: 0; }
svg { display: block; flex: none; overflow: visible; }
h1, h2, h3, p, ul { margin: 0; padding: 0; font: inherit; list-style: none; }

.tri { flex: none; width: 0; height: 0; border: solid transparent; border-width: 4px 3px 0; border-top-color: #666; }
.tri.dark { border-top-color: #111; }
.tri.pale { border-top-color: #aaa; }
.tri.up { border-width: 0 3px 4px; border-bottom-color: #666; }
.tri.up.pale { border-bottom-color: #aaa; }
.tri.blue { border-top-color: #2f4f9b; }
.tri.up.blue { border-bottom-color: #2f4f9b; }
.lat { font: 13px/8px "Liberation Mono", monospace; white-space: pre; vertical-align: 1px; }

/* title bar */
.titlebar { display: grid; grid-template-columns: 1fr auto 1fr; height: 30px; align-items: start; }
.quick { display: flex; align-items: center; height: 26px; padding-left: 1px; }
.qsep { width: 1px; height: 18px; background: #888; margin: 0 9px 0 4px; }
.qsep.end { margin: 0 6px 0 7px; }
.q { width: 26px; }
.q.undo { width: 22px; }
.q.redo { width: 22px; margin-left: 9px; }
.more { display: flex; border-top: 1px solid #111; padding-top: 2px; margin-top: 2px; }
h1 { color: #000; line-height: 30px; }
.winbtns { display: flex; justify-content: flex-end; padding: 12px 26px 0 0; gap: 47px; }
.winbtns button { width: 12px; }

/* tabs */
.tabs { display: flex; height: 32px; border-bottom: 1px solid #b4b8be; align-items: flex-end; padding-left: 1px; flex: none; }
.tabs > button { height: 31px; padding: 0 14px; color: #444; }
.tabs .file { width: 69px; color: #fff; border: 1px solid #1e6b34; border-bottom: 0; border-radius: 3px 3px 0 0; background: radial-gradient(ellipse at 50% 110%, #6fca4a, #2f8a2a 70%); margin-right: 4px; }
.tabs .on { padding: 0 12px; background: #fff; border: 1px solid #b4b8be; border-bottom: 0; border-radius: 3px 3px 0 0; height: 31px; margin: 0 1px -1px 0; }
.mdi { margin-left: auto; display: flex; align-items: center; gap: 14px; height: 32px; padding-right: 7px; }

/* ribbon */
.ribbon { position: relative; display: flex; height: 118px; flex: none; background: linear-gradient(#fff 0 40%, #f4f6f8 75%, #e7eaef); border-bottom: 2px solid #8b9198; }
.group { display: flex; flex-direction: column; flex: none; border-right: 1px solid #b9bec5; box-shadow: inset 1px 0 #fff; }
.group .body { flex: 1; display: flex; align-items: flex-start; }
.group footer { position: relative; display: flex; justify-content: center; height: 22px; line-height: 20px; color: #69707a; padding-right: 26px; }
.group footer svg { position: absolute; right: 5px; top: 5px; }
.g-clip { width: 133px; }
.group.g-clip footer { padding-right: 22px; }
.g-font { width: 286px; padding-left: 5px; }
.g-align { width: 277px; padding-left: 5px; }
.g-num { width: 164px; padding-left: 5px; }
.g-style { width: 565px; }
.group.g-style footer, .group.g-cells footer { padding-right: 0; }
.g-cells { width: 159px; padding-left: 4px; }
.g-edit { width: 270px; padding-left: 11px; }
.group.g-edit footer { padding-right: 9px; }
.rest { flex: 1 1 0; border: 0; }
.group .body.rows, .rows { display: flex; flex-direction: column; align-items: flex-start; gap: 9px; padding-top: 12px; }
.row { display: flex; align-items: center; height: 30px; }
.big { display: flex; flex-direction: column; align-items: center; padding-top: 9px; line-height: 20px; }
.big svg { margin-bottom: 7px; }
.big > .tri { margin-top: 7px; }
.big span { display: flex; align-items: center; }
.big span .tri { margin-left: 5px; }
.big.two span:last-child { margin-right: -9px; }
.paste { width: 56px; }
.paste svg { margin-left: 3px; }
.w70 { width: 70px; }
.g-style .body { padding-left: 2px; }
.w50 { width: 50px; }
.w80 { width: 79px; }
.smalls { display: flex; flex-direction: column; }
.smalls button { display: flex; align-items: center; gap: 5px; }
.smalls.wide { padding: 4px 0 0 3px; }
.smalls.wide button { height: 29px; gap: 5px; }
.smalls.wide .tri { margin-left: 1px; }
.smalls.tight { width: 97px; padding-top: 2px; }
.smalls.tight button { height: 26px; gap: 6px; }
.smalls.tight .tri { margin-left: 1px; }
.sigma { width: 14px; color: #000; font: bold 17px/20px "Liberation Serif", serif; }
.combo { display: grid; align-items: center; height: 30px; border: 1px solid #d0d3d8; background: #fff; }
.combo > * { grid-area: 1 / 1; }
.combo select { appearance: none; width: 100%; height: 27px; padding: 0 0 1px 2px; }
.combo .tri { justify-self: end; margin-right: 4px; pointer-events: none; }
.font-name { width: 169px; }
.font-size { width: 56px; margin-left: -1px; font-size: 16px; }
.num-format { width: 155px; }
.ib { display: flex; align-items: center; justify-content: center; width: 27px; height: 26px; flex: none; }
.ib.sel { border: 1px solid #c28a30; border-radius: 3px; background: linear-gradient(#ffdf86, #ffd257 50%, #fff08a); }
.serif { font: bold 16px/20px "Liberation Serif", serif; color: #222; }
.grow { font-size: 18px; margin-left: 2px; }
.shrink { font-size: 15px; width: 24px; }
.grow .tri, .shrink .tri { align-self: flex-start; margin-top: 4px; }
.dd { margin: 0 3px; }
.dd.near { margin-left: 0; }
.slant { width: 26px; }
.vs { width: 1px; height: 20px; margin: 0 5px 0 4px; background: #cfd3d9; flex: none; }
.vs.tall { height: 56px; margin: 18px 9px 0 2px; }
.fontcolor b { width: 20px; height: 19px; border-bottom: 5px solid #f00; font: bold 17px/13px "Liberation Serif", serif; color: #2f549c; }
.wen { flex-direction: column; font-size: 9px; line-height: 10px; font-weight: bold; color: #333; }
.wen span + span { color: #2b4cab; font-size: 11px; line-height: 14px; }
.lab { display: flex; gap: 6px; }
.lab .tri { margin-left: 0; }
.pct { font: 16px/20px "Liberation Serif", serif; color: #222; }
.comma { font: bold 24px/10px "Liberation Serif", serif; color: #222; padding-bottom: 10px; }
.dec { flex-direction: column; align-items: flex-end; padding-right: 6px; font: bold 10px/10px "Liberation Sans", sans-serif; color: #333; }
.dec span { display: flex; align-items: center; gap: 1px; }

.gallery { display: flex; margin: 5px 0 0 4px; height: 75px; }
.swatches { display: grid; grid-template: 27px 27px / repeat(3, 125px); gap: 6px; padding: 6px 4px 0 3px; border: 1px solid #cdd2d6; border-right: 0; }
.sw { text-align: left; padding-left: 7px; font: 300 19px/24px "Liberation Serif", "Noto Sans CJK SC", serif; height: 27px; }
.normal { color: #000; outline: 2px solid #f7d264; border-radius: 1px; box-shadow: 0 0 0 3px #c49a3c; }
.bad { background: #ffc7ce; color: #b0364a; }
.good { background: #c6efce; color: #1d7a2c; }
.neutral { background: #ffeb9c; color: #ab7420; }
.calc { background: #f2f2f2; border: 1px solid #7f7f7f; color: #fa7d00; font-weight: bold; padding-left: 5px; }
.check { background: #a5a5a5; border: 3px double #3f3f3f; color: #fff; font-weight: bold; padding-left: 3px; line-height: 19px; }
.gscroll { width: 18px; display: flex; flex-direction: column; }
.gscroll button { flex: 1; display: flex; flex-direction: column; align-items: center; justify-content: center; border: 1px solid #cdd2d6; margin-bottom: -1px; background: #fff; }
.gscroll button:first-child { background: #efefef; }
.bar { width: 7px; height: 1px; margin-bottom: 2px; background: #555; }
.pill { position: absolute; right: 0; top: 0; width: 11px; height: 64px; border: 3px solid #808080; border-radius: 6px; background: #fff; display: flex; align-items: flex-end; }
.pill span { width: 5px; height: 35px; background: #ff7a1a; border-radius: 2px; }

/* formula bar */
.formula { display: flex; align-items: center; height: 26px; flex: none; margin-top: 2px; border: solid #9aa0a8; border-width: 1px 0 1px 1px; font: 18px/24px "Liberation Serif", "Noto Sans CJK SC", serif; box-shadow: 0 -2px #dfe3e8; }
.namebox { width: 158px; text-align: center; padding-top: 2px; }
.formula > .tri { border-width: 5px 5px 0; margin: 0 7px; }
.fx { display: flex; align-items: center; justify-content: space-between; width: 101px; height: 24px; padding: 0 7px 0 5px; border: 1px solid #a9afb7; border-width: 0 1px; border-radius: 14px 0 0 14px; background: #dde1e7; }
.knob { width: 10px; height: 9px; border-radius: 5px; background: linear-gradient(#b5bac0, #fff); }
.fx em { font-weight: bold; font-size: 19px; color: #333; }
.fx sub { font-size: 15px; line-height: 1px; vertical-align: -2px; }
.fbar { flex: 1; padding: 2px 0 0 12px; }
.expand { width: 20px; height: 24px; display: grid; place-items: center; background: #dde1e7; border-left: 1px solid #a9afb7; }

/* workspace */
.work { display: flex; flex: 1; min-height: 0; margin-top: 3px; border-top: 2px solid #868c93; border-bottom: 2px solid #8d959e; box-shadow: 0 -3px #e4e8f0; }
.pane { display: flex; flex-direction: column; width: 306px; flex: none; padding: 2px 2px 11px; background: #e9ecf1; border: solid #8a9098; border-width: 0 1px; }
.pane h2 { height: 29px; padding-left: 2px; line-height: 28px; background: #cdd4dc; }
.pane p, .pane h3, .filebox, .btn, .dialog { font-family: "Noto Sans CJK SC", sans-serif; }
.pane p { margin: 8px 8px 0 9px; line-height: 15px; white-space: normal; }
.pane h3 { margin: 15px 8px 0 9px; height: 17px; border-bottom: 1px solid #9aa0a8; line-height: 15px; }
.pane p, .pane h3 { color: #444; }
.filebox { display: flex; flex: 1; margin: 7px 9px 79px 23px; border: 1px solid #868c93; background: #fff; color: #000; line-height: 17px; min-height: 0; }
.filebox ul { flex: 1; padding: 4px 6px 0; min-width: 0; }
.filebox li { display: flex; gap: 10px; padding: 0 0 18px 5px; margin-bottom: 8px; border-bottom: 1px solid #000; }
.filebox li div div { height: 17px; white-space: nowrap; }
.fscroll { display: flex; flex-direction: column; justify-content: space-between; align-items: center; width: 21px; padding: 9px 2px 9px 0; background: #f0f0f0; }
.pane a { display: flex; align-items: center; gap: 8px; padding-left: 11px; color: #0066cc; text-decoration: none; height: 20px; margin-top: -11px; }
.btn { height: 25px; border: 1px solid #adadad; background: #e1e1e1; color: #000; line-height: 23px; }
.paneclose { align-self: flex-end; width: 56px; margin: 8px 9px 0 0; }

.sheet { display: flex; flex-direction: column; flex: 1; min-width: 0; }
.gridrow { display: flex; flex: 1; min-height: 0; }
.grid { flex: 1; overflow: hidden; }
table { table-layout: fixed; width: 1632px; border-spacing: 0; font: 28px/28px "Liberation Serif", "Noto Sans CJK SC", serif; color: #000; }
.c-h { width: 40px; }
.c-a { width: 242px; }
.c-b { width: 256px; }
.c-c { width: 126px; }
.c-n { width: 88px; }
th, td { padding: 0; border: solid #d8d9db; border-width: 0 1px 1px 0; vertical-align: bottom; height: 34px; }
th { font-weight: normal; font-size: 20px; line-height: 24px; color: #3c3c3c; background: #dee2e7; border-color: #b0b5bc; }
thead th { height: 25px; line-height: 22px; }
.corner svg { margin: 0 0 3px 18px; }
th.hot { background: #ffd75e; border-color: #c28a30; }
thead th.hot { background: linear-gradient(#ffd058, #fff07a); }
td { position: relative; padding-left: 4px; }
.r1 th, .r1 td { height: 53px; }
.r1 th { padding-bottom: 6px; }
.r7 th, .r7 td { height: 36px; padding-bottom: 2px; }
.ideal, .real { padding: 0; text-align: center; font-size: 33px; line-height: 44px; border-color: transparent; }
.ideal { background: #00b0f0; color: #fff; font-weight: bold; }
.real { background: #c4bd97; font-weight: 300; }
.mid { padding: 0; text-align: center; font-weight: 300; }
.sm { padding-left: 3px; font-size: 20px; line-height: 24px; }
.flag::before { content: ""; position: absolute; left: 0; top: 0; border: solid transparent; border-width: 6px 6px 0 0; border-top-color: #0a7d14; }
.active::before { content: ""; position: absolute; z-index: 2; right: -3px; bottom: -3px; width: 5px; height: 5px; background: #000; outline: 1px solid #fff; }
.active::after { content: ""; position: absolute; z-index: 1; inset: -2px; border: 3px solid #000; }

.vscroll { display: flex; flex-direction: column; align-items: center; width: 20px; background: #dde1e7; }
.split { width: 18px; height: 8px; border: 2px solid #8a9098; background: #fff; flex: none; }
.arrow { width: 0; height: 0; border: 5px solid transparent; flex: none; }
.arrow.up { border-top: 0; border-bottom: 6px solid #444; margin: 8px 0 7px; }
.arrow.down { border-bottom: 0; border-top: 6px solid #444; margin: 8px; }
.arrow.left { border-left: 0; border-right-color: #444; margin: 0 8px 0 7px; }
.arrow.right { border-right: 0; border-left-color: #444; margin: 0 8px; }
.track { flex: 1; align-self: stretch; }
.thumb { display: flex; flex-direction: column; align-items: center; justify-content: center; gap: 1px; width: 19px; height: calc(53% - 3px); border: 1px solid #8a9098; border-radius: 2px; background: linear-gradient(90deg, #f5f7fa, #e9ecf1 50%, #d5dae1); }
.thumb i { width: 8px; height: 1px; background: #666; }
.bottom { display: flex; height: 20px; border-top: 1px solid #9aa0a8; background: #dde1e7; flex: none; }
.navs { display: flex; width: 80px; border-right: 1px solid #9aa0a8; }
.navs button { flex: 1; display: grid; place-items: center; }
.stab { font: 300 18px/19px "Liberation Serif", "Noto Sans CJK SC", serif; color: #555; background: #e3e6eb; height: 19px; }
.navs + .stab { padding-left: 7px; }
.stab.last { padding-right: 6px; border-right: 1px solid #9aa0a8; }
.stab.on { background: #fff; padding: 0 2px 0 9px; color: #444; }
.stab.eng { font: 15px/20px "Liberation Mono", monospace; }
.newsheet { width: 21px; display: grid; place-items: center; }
.hscroll { margin-left: auto; width: 657px; display: flex; align-items: center; padding-right: 20px; }
.hsplit { width: 9px; height: 19px; border: 2px solid #8a9098; background: #fff; flex: none; }
.htrack { flex: 1; }
.hthumb { display: flex; justify-content: center; align-items: center; gap: 1px; width: 92%; height: 19px; border: 1px solid #8a9098; border-radius: 2px; background: linear-gradient(#f7f8fa, #e9ecf0 50%, #dadee4); }
.hthumb i { width: 1px; height: 7px; background: #777; }

/* status */
.status { display: flex; align-items: center; justify-content: space-between; height: 26px; flex: none; background: linear-gradient(#e6e9ed, #c9cdd2 50%, #babec3); }
.ready { padding: 0 9px 0 8px; border-right: 1px solid #878c93; height: 24px; line-height: 22px; }
.views { display: flex; align-items: center; height: 24px; padding: 0 4px; border-left: 1px solid #9a9fa6; }
.views button { width: 23px; height: 23px; display: grid; place-items: center; }
.views .sel { border: 1px solid #c28a30; border-radius: 3px; background: linear-gradient(#ffdf86, #ffd257 50%, #fff08a); }
.pctv { margin: 0 7px 0 11px; width: 41px; }
.views .round { width: 19px; height: 19px; border: 1px solid #7f858c; border-radius: 50%; background: linear-gradient(#fff, #d9dde1); font: bold 17px/15px "Liberation Sans", sans-serif; color: #555; }
.views input { appearance: none; width: 126px; height: 20px; background: linear-gradient(#8d93a0, #8d93a0) center / 100% 1px no-repeat; }
.views input::-webkit-slider-thumb { appearance: none; width: 11px; height: 15px; background: #eef0f3; border: 1px solid #6e747b; border-radius: 2px 2px 6px 6px; }

/* taskbar */
.taskbar { display: flex; height: 50px; flex: none; color: #000; background: linear-gradient(90deg, #d0d0d0, #d5d5d3 32%, #e4d6d0 38%, #e9dace 50%, #e2d4d1 75%, #e0d5d3 82%, #d3d1cf 90%, #d2d0ce); }
.start { width: 60px; display: grid; place-items: center; }
.search { display: flex; align-items: center; gap: 14px; width: 429px; height: 48px; margin-top: 1px; padding-left: 15px; background: #fff; }
.search input { flex: 1; font-size: 19px; }
.search input::placeholder { color: #333; opacity: 1; }
.app { width: 62px; display: grid; place-items: center; }
.app.run { background: linear-gradient(#0078d7, #0078d7) center bottom / 51px 3px no-repeat; }
.app.run.cur { background: linear-gradient(#0078d7, #0078d7) center bottom / 100% 3px no-repeat, #f6f1ee; }
.tray { margin-left: auto; display: flex; align-items: center; padding-right: 5px; }
.battery { width: 42px; height: 24px; margin-right: 9px; padding: 1px 4px 1px 1px; border: 2px solid #777; border-radius: 2px; background: #fff; box-shadow: 3px 0 0 -1px #fff; }
.battery b { display: block; width: 33px; height: 18px; background: #1a9245; color: #fff; font: 13px/18px "Open Sans", sans-serif; text-align: center; }
.g1, .g2 { margin-right: 12px; }
.g3 { margin-right: 8px; }
.ime { font-size: 20px; }
.clock { width: 101px; display: flex; flex-direction: column; text-align: center; line-height: 23px; }
.notice { position: relative; width: 46px; margin-left: 12px; border-right: 1px solid #aaa; height: 50px; padding: 15px 0 0; }
.notice span { position: absolute; left: 10px; top: 24px; width: 20px; height: 20px; border: 1px solid #777; border-radius: 50%; background: #ddd; text-align: center; font-weight: bold; line-height: 18px; }

/* dialog */
.dialog { position: absolute; left: 1056px; top: 334px; width: 679px; border: 1px solid #6b6b6b; background: #f0f0f0; color: #000; box-shadow: 0 4px 14px rgba(0, 0, 0, 0.3); padding-bottom: 9px; z-index: 3; }
.dtitle { display: flex; align-items: center; height: 37px; padding: 0 22px 1px 8px; background: #fff; font-family: "Open Sans", "Noto Sans CJK SC", sans-serif; }
.dtitle span { flex: 1; }
.dtitle button { width: 14px; margin-left: 43px; }
.dtabs { display: flex; align-items: flex-end; padding: 8px 0 0 10px; }
.dtabs button { width: 78px; height: 23px; border: solid #dcdcdc; border-width: 1px 0 0 1px; }
.dtabs .on { width: 84px; height: 25px; background: #fff; border-width: 1px 1px 0; margin-bottom: -1px; position: relative; }
.dpanel { display: grid; grid-template-columns: 105px 1fr; row-gap: 4px; height: 109px; margin: 0 11px 0 8px; padding: 10px 11px 0 14px; border: 1px solid #dcdcdc; background: #fff; align-content: start; }
.dpanel label { line-height: 24px; height: 23px; white-space: nowrap; }
.dcombo { display: flex; height: 23px; border: 1px solid #a6a6ab; }
.dcombo input { flex: 1; padding-left: 4px; font: 13px/20px "Liberation Mono", monospace; }
.dcombo button { width: 22px; display: grid; place-items: center; background: #e1e1e1; border: 1px solid #adadad; }
.opt { grid-column: 2; justify-self: end; width: 113px; margin-top: 7px; }
.dbtns { display: flex; gap: 15px; padding: 9px 0 0 8px; }
.dbtns .btn { width: 112px; }
.dbtns .far { margin-left: 13px; }
.dbtns .wide { width: 125px; }
.dbtns .focus { border: 2px solid #0078d7; outline: 1px dotted #000; outline-offset: -4px; line-height: 21px; }
</style>
